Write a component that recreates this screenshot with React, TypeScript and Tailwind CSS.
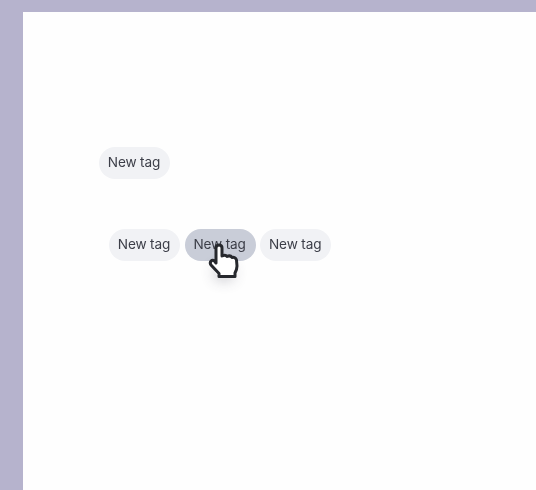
function Tag({ active = false }: { active?: boolean }) {
  return (
    <div
      className={`flex h-[32px] w-[71px] items-center justify-center rounded-full pr-[1px] text-[13.6px] leading-none tracking-[-0.15px] text-[#3c3e48] blur-[0.35px] ${
        active ? "bg-[#c9cdd8]" : "bg-[#f1f2f5]"
      }`}
    >
      New tag
    </div>
  );
}

function HandCursor() {
  return (
    <svg
      className="absolute left-[206px] top-[240px] blur-[0.3px]"
      width="36"
      height="42"
      viewBox="0 0 36 42"
      fill="none"
    >
      <path
        d="M10 8c0-4 6-4 6 0v8c2-1 4-1 5 .5 2-1 4-.5 5 1 2-.5 4 .5 4.500 2.500l.5 6c0 3-1 5-2 7v3.500H13v-3L5 25c-2-3 1-6 3.500-4l1.500 2V8z"
        fill="#ffffff"
        stroke="#26282d"
        strokeWidth="3"
        strokeLinejoin="round"
      />
    </svg>
  );
}

export default function App() {
  return (
    <div
      className="relative h-[490px] w-[536px] overflow-hidden bg-[#b6b3cd] pl-[23px] pt-[12px]"
      style={{ fontFamily: '"Inter", "Noto Sans", sans-serif' }}
    >
      <div className="h-[478px] w-[513px] bg-[#fefefe] pl-[76px] pt-[135px]">
        <Tag />
        <div className="ml-[10px] mt-[50px] flex gap-[4.600px]">
          <Tag />
          <Tag active />
          <Tag />
        </div>
      </div>
      <div className="absolute left-[214px] top-[262px] h-[14px] w-[20px] rounded-full shadow-[0_4px_14px_rgba(60,60,80,0.3)]" />
      <HandCursor />
    </div>
  );
}
